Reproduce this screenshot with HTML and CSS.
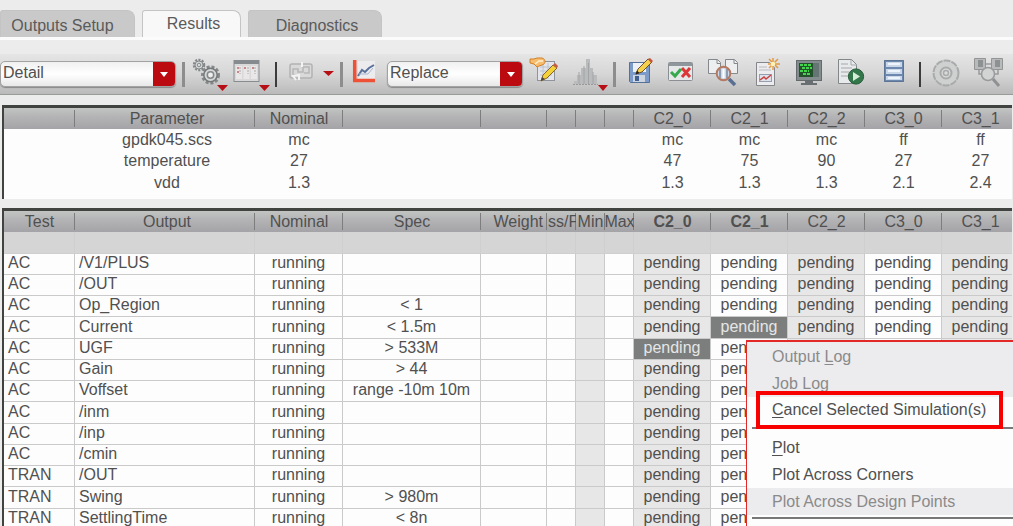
FILE: index.html
```html
<!DOCTYPE html>
<html lang="en">
<head>
<meta charset="utf-8">
<title>Results</title>
<link rel="stylesheet" href="styles.css">
</head>
<body>
<nav class="tabs" role="tablist">
  <button class="tab tab-setup" role="tab">Outputs Setup</button>
  <button class="tab tab-results active" role="tab" aria-selected="true">Results</button>
  <button class="tab tab-diag" role="tab">Diagnostics</button>
</nav>

<div class="toolbar" role="toolbar">
  <label class="combo combo-view"><select aria-label="View"><option>Detail</option></select></label>
  <span class="sep soft"></span>
  <button class="tool" aria-label="Simulation options"><svg width="40" height="40" viewBox="0 0 40 40"><g fill="none" stroke="#85888a"><circle cx="9" cy="11" r="5" stroke-width="2.5" stroke-dasharray="2 1.2"/><circle cx="9" cy="11" r="4" fill="#d8dada"/><circle cx="9" cy="11" r="1.8"/><circle cx="20.500" cy="21" r="8" stroke-width="3" stroke-dasharray="3 1.800"/><circle cx="20.500" cy="21" r="6.700" fill="#d4d6d7" stroke="#747879" stroke-width="1.500"/><circle cx="20.500" cy="21" r="3.200" fill="#eee" stroke-width="1.500"/></g><path d="M27 31h11l-5.500 6z" fill="#b80f16"/></svg></button>
  <button class="tool" aria-label="Table options"><svg width="40" height="40" viewBox="0 0 40 40"><rect x="4" y="6.500" width="25" height="21" fill="#d9d9d9" stroke="#898c8e"/><path d="M4 7h25v3H4z" fill="#868b8f"/><path d="M6 12h6v13H6zM13.500 12h6v13h-6zM21 12h6v13h-6z" fill="#e9e7e7"/><path d="M8 13v2M8 17v2M15 13v2M23 13v2" stroke="#c26a6a" stroke-width="1.500"/><path d="M10 13v7M18 13v7M25 13v7" stroke="#aaa" stroke-dasharray="2 1"/><path d="M29 31h11l-5.500 6z" fill="#b80f16"/></svg></button>
  <span class="sep"></span>
  <button class="tool" aria-label="Back annotate" disabled><svg width="36" height="40" viewBox="0 0 36 40"><rect x="8" y="10" width="22" height="14" rx="2" fill="#d9d9d9" stroke="#b3b3b3" stroke-width="1.500"/><path d="M17 21h-6v-6h5v3h5v-5h6v6h-5" fill="none" stroke="#b6b6b6" stroke-width="1.500"/><path d="M20 8v5M14 26l-3-4 5-1M17 20v6" fill="none" stroke="#f3f3f3" stroke-width="2"/></svg></button>
  <button class="tool" aria-label="Annotation menu"><svg width="18" height="40" viewBox="0 0 18 40"><path d="M5 17h11l-5.500 5z" fill="#b80f16"/></svg></button>
  <span class="sep soft"></span>
  <button class="tool" aria-label="Plot"><svg width="38" height="40" viewBox="0 0 38 40"><path d="M12 7h17v18H12z" fill="#ecebee"/><path d="M8.700 6v20.500H29" fill="none" stroke="#ef5136" stroke-width="3.500"/><path d="M12 22l4-6 3 2 4-4 5-3" fill="none" stroke="#59719b" stroke-width="2"/><path d="M13 20h9l5-6" fill="none" stroke="#a7b5cf"/></svg></button>
  <label class="combo combo-mode"><select aria-label="Plot mode"><option>Replace</option></select></label>
  <button class="tool" aria-label="Edit expression"><svg width="38" height="40" viewBox="0 0 38 40"><rect x="11.500" y="7.500" width="17" height="19" fill="#e3e5ea" stroke="#8f949c"/><path d="M14 13h12M14 17h12M14 21h12M17 9v16M22 9v16" stroke="#bcc2ce"/><path d="M4 5h4l3-1h5c4 1 4 6 0 7l-3 1-2 1-3-3-4-1z" fill="#f8bd6c" stroke="#d1802a"/><path d="M9 10l4-3h4" fill="none" stroke="#fff0cf" stroke-width="1.500"/><path d="M15 27l2-6L27 11l4 3-10 10z" fill="#f5d139" stroke="#87652e"/><path d="M27 11l4 3 1-2-3-3z" fill="#ca5a45"/><path d="M15 27l1-4 3 2z" fill="#4d443c"/></svg></button>
  <button class="tool" aria-label="Histogram"><svg width="44" height="40" viewBox="0 0 44 40"><path d="M10 30v-3h3v-6h4v-7h5V5h4v9h3v7h4v9z" fill="#b9bbbc"/><path d="M15 30V18M20 30V12M24.500 30V9M29 30V18" stroke="#a2a5a6"/><path d="M9 30.500h25" stroke="#999" stroke-dasharray="2 1"/><path d="M34 31h10l-5 6z" fill="#b80f16"/></svg></button>
  <span class="sep soft"></span>
  <button class="tool" aria-label="Save"><svg width="42" height="40" viewBox="0 0 42 40"><path d="M9.500 8.500h20v20h-19l-1-1z" fill="#7c9bc8" stroke="#56709a"/><path d="M13 9h13v9H13z" fill="#edf1f7"/><path d="M13 21h12v7H13z" fill="#cdd5e1"/><path d="M15 22h4v5h-4z" fill="#42608f"/><path d="M16 20l2-5L28 5l4 3-10 10z" fill="#f5d04a" stroke="#705129"/><path d="M28 5l2-1 3 3-2 2z" fill="#c7553e"/><path d="M15.500 20.500l1.500-4 2.500 2.500z" fill="#28231f"/></svg></button>
  <button class="tool" aria-label="Pass or fail"><svg width="40" height="40" viewBox="0 0 40 40"><rect x="6.500" y="8.500" width="24" height="18" rx="1" fill="#e6e7e8" stroke="#8b8f93"/><path d="M7 9h23v3H7z" fill="#8f969c"/><path d="M9 18l4 4 6-7" fill="none" stroke="#37a94d" stroke-width="3"/><path d="M20 14l8 9M28 14l-8 9" stroke="#dc3638" stroke-width="3"/></svg></button>
  <button class="tool" aria-label="Compare documents"><svg width="44" height="40" viewBox="0 0 44 40"><path d="M6.500 5.500h9l3 3v11h-12zM23.500 5.500h9l3 3v11h-12z" fill="#edeef0" stroke="#85898d"/><path d="M15 5.500v4h4M32 5.500v4h4" fill="none" stroke="#85898d"/><circle cx="21.500" cy="19.500" r="6.800" fill="#cddae8" stroke="#b47962" stroke-width="2"/><path d="M18 15v9M25 15v9" stroke="#77869a" stroke-width="1.500"/><path d="M21.500 15v9" stroke="#fff" stroke-width="2"/><path d="M27 25l6 6" stroke="#596f92" stroke-width="3.500"/></svg></button>
  <button class="tool" aria-label="New report"><svg width="42" height="40" viewBox="0 0 42 40"><path d="M10.500 8.500h13l5 5v18h-18z" fill="#ececee" stroke="#83878b"/><path d="M13 13h8M13 16h12" stroke="#b7bac0"/><rect x="13.500" y="20.500" width="12" height="7" fill="#dce1ea" stroke="#949eae"/><path d="M14 26l4-3 2 2 5-4" fill="none" stroke="#c94440" stroke-width="1.500"/><path d="M27 4v12M22 10h12M23 5l9 9M32 5l-9 9" stroke="#e39b43" stroke-width="1.500"/><circle cx="27" cy="10" r="2.300" fill="#fff2b3"/></svg></button>
  <button class="tool" aria-label="Job monitor"><svg width="42" height="40" viewBox="0 0 42 40"><rect x="8.500" y="6.500" width="25" height="20" fill="#858c8d" stroke="#646b6d"/><path d="M11 9h20v14H11z" fill="#24502c"/><path d="M12 11h12M14 14h10M12 17h9M15 20h8" stroke="#45d44d" stroke-width="2" stroke-dasharray="3 1"/><path d="M25 9h6v14h-6z" fill="#647574"/><path d="M17 27h8v2h4v2H13v-2h4z" fill="#686e71"/></svg></button>
  <button class="tool" aria-label="Run script"><svg width="44" height="40" viewBox="0 0 44 40"><path d="M8.500 5.500h13l5 5v19h-18z" fill="#e7e9ea" stroke="#82878a"/><path d="M21 5.500V11h6M11 10h7M11 14h11M11 18h8M11 22h7" fill="none" stroke="#a5a9ac"/><circle cx="26" cy="22.500" r="7.600" fill="#33784b" stroke="#245a38"/><path d="M23 18v9l7-4.500z" fill="#d5efd7"/></svg></button>
  <button class="tool" aria-label="Results database"><svg width="40" height="40" viewBox="0 0 40 40"><rect x="10" y="6" width="20" height="22" rx="1" fill="#6d88ae"/><path d="M12 8h16v5H12zM12 15h16v5H12zM12 22h16v4H12z" fill="#c9d7e9"/><path d="M14 10h12M14 17h12M14 24h12" stroke="#eef4fb" stroke-width="2"/><path d="M10.500 6.500h19v21h-19z" fill="none" stroke="#5d7594"/></svg></button>
  <span class="sep"></span>
  <button class="tool" aria-label="Settings" disabled><svg width="40" height="40" viewBox="0 0 40 40"><g fill="none" stroke="#a9aaab"><circle cx="20" cy="19" r="12.500" fill="#cfd0d0" stroke-width="2" stroke-dasharray="7 1"/><circle cx="20" cy="19" r="5.500" fill="#d9dada" stroke-width="2"/><circle cx="20" cy="19" r="2.500" stroke-width="1.500"/></g></svg></button>
  <button class="tool" aria-label="Inspect flow" disabled><svg width="46" height="40" viewBox="0 0 46 40"><path d="M8.500 4.500h11v11h-11zM25.500 4.500h11v11h-11z" fill="#b9babb" stroke="#929495"/><path d="M12 6h5v7h-5zM29 6h5v7h-5z" fill="#8e9192"/><path d="M13 16v4h3M32 16v4h-3M20 10h5" fill="none" stroke="#999b9c" stroke-width="1.500"/><circle cx="22" cy="20" r="6.500" fill="#d2d3d3" stroke="#989a9b" stroke-width="1.500"/><path d="M27 25l6 7" stroke="#8f9192" stroke-width="3"/></svg></button>
</div>

<main class="panes">
<section class="pane corners">
<table class="grid params">
<colgroup><col class="c-test"><col class="c-output"><col class="c-nominal"><col class="c-spec"><col class="c-weight"><col class="c-small"><col class="c-small"><col class="c-small"><col class="c-corner"><col class="c-corner"><col class="c-corner"><col class="c-corner"><col class="c-corner"></colgroup>
<thead><tr><th></th><th>Parameter</th><th>Nominal</th><th></th><th></th><th></th><th></th><th></th><th>C2_0</th><th>C2_1</th><th>C2_2</th><th>C3_0</th><th>C3_1</th></tr></thead>
<tbody>
<tr><td></td><td>gpdk045.scs</td><td>mc</td><td></td><td></td><td></td><td></td><td></td><td>mc</td><td>mc</td><td>mc</td><td>ff</td><td>ff</td></tr>
<tr><td></td><td>temperature</td><td>27</td><td></td><td></td><td></td><td></td><td></td><td>47</td><td>75</td><td>90</td><td>27</td><td>27</td></tr>
<tr><td></td><td>vdd</td><td>1.3</td><td></td><td></td><td></td><td></td><td></td><td>1.3</td><td>1.3</td><td>1.3</td><td>2.1</td><td>2.4</td></tr>
</tbody>
</table>
</section>

<section class="pane outputs">
<table class="grid results">
<colgroup><col class="c-test"><col class="c-output"><col class="c-nominal"><col class="c-spec"><col class="c-weight"><col class="c-small"><col class="c-small"><col class="c-small"><col class="c-corner"><col class="c-corner"><col class="c-corner"><col class="c-corner"><col class="c-corner"></colgroup>
<thead><tr><th>Test</th><th>Output</th><th>Nominal</th><th>Spec</th><th class="tight">Weight</th><th class="tight">ss/F</th><th class="tight">Min</th><th class="tight"><span class="clip">Max</span></th><th class="picked">C2_0</th><th class="picked">C2_1</th><th>C2_2</th><th>C3_0</th><th>C3_1</th></tr></thead>
<tbody>
<tr class="blank"><td></td><td></td><td></td><td></td><td></td><td></td><td></td><td></td><td></td><td></td><td></td><td></td><td></td></tr>
<tr><td>AC</td><td>/V1/PLUS</td><td>running</td><td></td><td></td><td></td><td></td><td></td><td>pending</td><td>pending</td><td>pending</td><td>pending</td><td>pending</td></tr>
<tr><td>AC</td><td>/OUT</td><td>running</td><td></td><td></td><td></td><td></td><td></td><td>pending</td><td>pending</td><td>pending</td><td>pending</td><td>pending</td></tr>
<tr><td>AC</td><td>Op_Region</td><td>running</td><td>&lt; 1</td><td></td><td></td><td></td><td></td><td>pending</td><td>pending</td><td>pending</td><td>pending</td><td>pending</td></tr>
<tr><td>AC</td><td>Current</td><td>running</td><td>&lt; 1.5m</td><td></td><td></td><td></td><td></td><td>pending</td><td class="selected">pending</td><td>pending</td><td>pending</td><td>pending</td></tr>
<tr><td>AC</td><td>UGF</td><td>running</td><td>&gt; 533M</td><td></td><td></td><td></td><td></td><td class="selected">pending</td><td>pending</td><td></td><td></td><td></td></tr>
<tr><td>AC</td><td>Gain</td><td>running</td><td>&gt; 44</td><td></td><td></td><td></td><td></td><td>pending</td><td>pending</td><td></td><td></td><td></td></tr>
<tr><td>AC</td><td>Voffset</td><td>running</td><td>range -10m 10m</td><td></td><td></td><td></td><td></td><td>pending</td><td>pending</td><td></td><td></td><td></td></tr>
<tr><td>AC</td><td>/inm</td><td>running</td><td></td><td></td><td></td><td></td><td></td><td>pending</td><td>pending</td><td></td><td></td><td></td></tr>
<tr><td>AC</td><td>/inp</td><td>running</td><td></td><td></td><td></td><td></td><td></td><td>pending</td><td>pending</td><td></td><td></td><td></td></tr>
<tr><td>AC</td><td>/cmin</td><td>running</td><td></td><td></td><td></td><td></td><td></td><td>pending</td><td>pending</td><td></td><td></td><td></td></tr>
<tr><td>TRAN</td><td>/OUT</td><td>running</td><td></td><td></td><td></td><td></td><td></td><td>pending</td><td>pending</td><td></td><td></td><td></td></tr>
<tr><td>TRAN</td><td>Swing</td><td>running</td><td>&gt; 980m</td><td></td><td></td><td></td><td></td><td>pending</td><td>pending</td><td></td><td></td><td></td></tr>
<tr><td>TRAN</td><td>SettlingTime</td><td>running</td><td>&lt; 8n</td><td></td><td></td><td></td><td></td><td>pending</td><td>pending</td><td></td><td></td><td></td></tr>
</tbody>
</table>
</section>
</main>

<div class="menu" role="menu">
  <div class="menu-group muted">
    <button role="menuitem" disabled>Output <u>L</u>og</button>
    <button role="menuitem" disabled><u>J</u>ob Log</button>
  </div>
  <div class="menu-group">
    <button role="menuitem" class="marked"><u>C</u>ancel Selected Simulation(s)</button>
  </div>
  <hr>
  <div class="menu-group plots">
    <button role="menuitem"><u>P</u>lot</button>
    <button role="menuitem">Plot Across Corners</button>
    <button role="menuitem" disabled>Plot Across Design Points</button>
  </div>
  <hr>
</div>
</body>
</html>
```

FILE: styles.css
```css
* { box-sizing: border-box; }

body {
  margin: 0;
  height: 100vh;
  overflow: hidden;
  display: flex;
  flex-direction: column;
  position: relative;
  background: #ececec;
  color: #505050;
  font: 16px/20px "Liberation Sans", Arial, sans-serif;
}

button, select { font: inherit; color: inherit; }

/* Tabs */
.tabs {
  display: flex;
  flex: none;
  gap: 7px;
  height: 40px;
  padding-top: 10px;
  border-bottom: 3px solid #fbfbfb;
}
.tab {
  border: 1px solid #c4c4c4;
  border-bottom: 0;
  border-radius: 3px 8px 0 0;
  background: #c9c9c9;
  color: #5a5a5a;
  padding: 4px 0 0;
}
.tab-setup { width: 135px; padding-right: 10px; }
.tab-results { width: 99px; }
.tab-diag { width: 134px; padding-left: 4px; }
.tab.active { background: #f8f8f8; padding: 0 0 0 4px; }

/* Toolbar */
.toolbar {
  flex: none;
  display: grid;
  grid-template-columns:
    176px 14px 40px 40px 12px 36px 18px 10px 38px 142px 38px 44px
    12px 42px 40px 44px 42px 42px 44px 40px 12px 40px 46px;
  align-items: center;
  justify-items: center;
  height: 41px;
  margin-top: 14px;
  background: linear-gradient(#e4e5e4, #d5d6d5 50%, #b9bab9);
  border-bottom: 1px solid #999b99;
}
.tool {
  display: block;
  padding: 0;
  border: 0;
  background: none;
  height: 40px;
}
.tool svg { display: block; }
.sep { width: 2px; height: 25px; background: #3c3c3c; }
.sep.soft { width: 3px; background: #8d8d8d; }
.combo {
  position: relative;
  display: block;
  height: 26px;
  border: 1px solid #a2a2a2;
  border-radius: 5px;
  background: linear-gradient(#f0f0f0, #fff 50%, #e8e8e8);
  box-shadow: 0 1px 1px #888;
  overflow: hidden;
}
.combo-view { width: 100%; }
.combo-mode { width: 136px; }
.combo select {
  appearance: none;
  display: block;
  width: 100%;
  height: 22px;
  padding: 0 24px 0 2px;
  border: 0;
  background: none;
}
.combo::before {
  content: "";
  position: absolute;
  inset: 0 0 0 auto;
  width: 22px;
  background: #bb0a10;
  pointer-events: none;
}
.combo::after {
  content: "";
  position: absolute;
  right: 7px;
  top: 10px;
  border: 4px solid transparent;
  border-top: 5px solid #fff;
  border-bottom: 0;
  pointer-events: none;
}

/* Tables */
.panes {
  flex: 1;
  min-height: 0;
  display: flex;
  flex-direction: column;
  gap: 9px;
  margin: 10px 1px 0 2px;
}
.pane {
  border-top: 3px solid #414341;
  border-left: 2px solid #414341;
  overflow: hidden;
}
.corners { flex: none; background: #fdfdfd; padding-bottom: 5px; }
.outputs { flex: 1; min-height: 0; }
.grid {
  table-layout: fixed;
  width: 1014px;
  border-collapse: separate;
  border-spacing: 0;
}
.c-test { width: 71px; }
.c-output { width: 180px; }
.c-nominal { width: 88px; }
.c-spec { width: 138px; }
.c-weight { width: 66px; }
.c-small { width: 29px; }
.c-corner { width: 77px; }

.grid th, .grid td {
  padding: 0;
  text-align: center;
  white-space: nowrap;
  overflow: hidden;
}
.grid th:nth-child(2), .params td:nth-child(2) { padding-left: 4px; }
.grid th {
  height: 21px;
  font-weight: normal;
  line-height: 19px;
  background:
    linear-gradient(#7d7d7d, #7d7d7d) right 2px / 1px 17px no-repeat,
    linear-gradient(#c2c4c2, #b4b4b6 40%, #a4a3a7);
}
.grid th.tight { padding: 0 1px; }
.grid th.tight:nth-child(5) { text-align: right; padding-right: 4px; }
.grid th.picked { font-weight: bold; }
.clip { display: flex; justify-content: center; }
.grid td { height: 21px; line-height: 18px; }
.params tbody tr:nth-child(n+2) td { height: 22px; }

.results td {
  background: #fdfdfd;
  border-right: 1px solid #cacaca;
  border-bottom: 1px solid #cacaca;
  padding-bottom: 2px;
}
.results tr:nth-child(4n+1) td { height: 22px; }
.results td:nth-child(-n+2) { text-align: left; padding-left: 4px; }
.results td:nth-child(7),
.results td:nth-child(9),
.results td:nth-child(11),
.results td:nth-child(13) { background: #e7e7e7; }
.results .blank td { background: #d6d5d6; border-color: #cfcfcf; }
.results td.selected { background: #7b7e7d; color: #e6e6e6; }

/* Context menu */
.menu {
  position: absolute;
  left: 746px;
  right: 0;
  top: 340px;
  height: 200px;
  background: #fdfdfd;
  border: 1px solid #e32828;
  border-width: 2px 0 0 1px;
}
.menu-group { display: flex; flex-direction: column; }
.menu button {
  height: 27px;
  padding: 0 0 0 25px;
  border: 0;
  background: none;
  text-align: left;
  white-space: nowrap;
  font-size: 16px;
}
.menu button:disabled { color: #8a8a8a; }
.menu .muted { background: #ececee; padding-top: 1px; }
.menu .marked {
  position: relative;
  width: 239px;
  height: 30px;
  margin: -2px 0 0 13px;
  padding-left: 12px;
  outline: 4px solid #f80000;
}
.menu hr {
  margin: 2px 0 0 5px;
  border: 0;
  border-top: 2px solid #777;
}
.menu .plots { padding-top: 5px; }
.menu .plots button:disabled { background: #ececee; }
.menu u { text-underline-offset: 2px; }
```
